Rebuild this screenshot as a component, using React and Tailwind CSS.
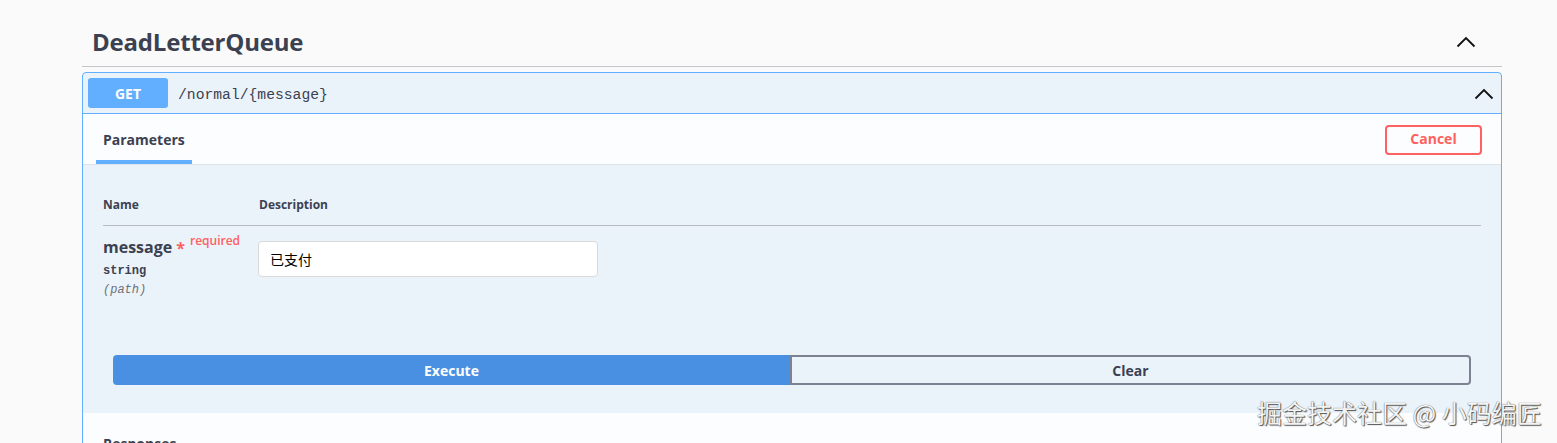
import React from "react";

const Chevron = ({ className }) => (
  <svg className={className} width="20" height="12" viewBox="0 0 20 12" fill="none">
    <path d="M1.5 10.5 L10 2 L18.5 10.5" stroke="#111" strokeWidth="1.8" />
  </svg>
);

export default function App() {
  const sans = "font-['Open_Sans','Noto_Sans','Noto_Sans_CJK_SC',sans-serif]";
  return (
    <div className={`relative min-h-screen bg-[#fafafa] ${sans} text-[#3b4151] overflow-hidden`}>
      <div className="ml-[82px] w-[1420px]">
        <div className="h-[67px] pt-[18px] border-b border-[#c4c6cb] flex items-center justify-between pl-[10px] pr-[26px]">
          <h3 className="text-[24px] font-bold leading-[48px] tracking-[-0.2px]">DeadLetterQueue</h3>
          <Chevron className="mt-[-1px]" />
        </div>

        <div className="mt-[5px] border border-[#61affe] rounded-[4px] bg-[#ebf3fa]">
          <div className="flex items-center p-[5px] border-b border-[#61affe]">
            <span className="w-[80px] h-[30px] rounded-[3px] bg-[#61affe] text-white text-[14px] font-bold flex items-center justify-center">
              GET
            </span>
            <span className="ml-[10px] mt-[4px] font-['Liberation_Mono',monospace] text-[14.7px] text-[#3b4151]">
              /normal/{"{message}"}
            </span>
            <Chevron className="ml-auto mr-[2px] mt-[2px]" />
          </div>

          <div className="h-[51px] bg-[#fcfdfe] border-b border-[#dfe3e8] flex items-end justify-between pl-[11px] pr-[19px]">
            <div className="flex flex-col items-center">
              <span className="px-[9px] text-[14px] font-bold leading-[20px] pb-[10px]">Parameters</span>
              <span className="h-[4px] w-[96px] bg-[#61affe]"></span>
            </div>
            <button className="mb-[9px] w-[97px] h-[30px] border-2 border-[#ff6060] rounded-[4px] text-[#ff6060] text-[14px] font-bold bg-transparent leading-[20px] pb-[2px]">
              Cancel
            </button>
          </div>

          <div className="px-[20px] pt-[31px] pb-[28px]">
            <div className="flex text-[12px] font-bold leading-[18px] pb-[11px] border-b border-[#b7bcc4]">
              <span className="w-[156px]">Name</span>
              <span>Description</span>
            </div>
            <div className="flex items-start">
              <div className="w-[155px] pt-[11px]">
                <div className="text-[16px] font-bold leading-[20px] flex items-start">
                  <span>message</span>
                  <span className="ml-[4px] text-[#ff6060] text-[16px] leading-[22px]">*</span>
                  <span className="ml-[5px] text-[#ff6060] text-[12px] font-semibold leading-[12px] mt-[-2px]">required</span>
                </div>
                <div className="mt-[5px] font-['Liberation_Mono',monospace] text-[12px] font-bold leading-[14px]">string</div>
                <div className="mt-[5px] font-['Liberation_Mono',monospace] text-[12px] italic leading-[14px] text-[#6b6f78]">(path)</div>
              </div>
              <div className="pt-[15px]">
                <div className="w-[340px] h-[36px] bg-white border border-[#d9d9d9] rounded-[4px] pl-[11px] flex items-center text-[14px] text-black font-['Noto_Sans_CJK_SC',sans-serif]">
                  已支付
                </div>
              </div>
            </div>
            <div className="mt-[58px] mx-[10px] flex h-[30px]">
              <button className="flex-1 bg-[#4990e2] text-white text-[14px] font-bold rounded-l-[4px]">Execute</button>
              <button className="flex-1 border-2 border-[#7d8293] rounded-r-[4px] text-[14px] font-bold text-[#3b4151] bg-transparent">
                Clear
              </button>
            </div>
          </div>

          <div className="bg-[#fcfdfe] pt-[18px] pl-[20px] h-[120px]">
            <span className="text-[14px] font-bold leading-[20px]">Responses</span>
          </div>
        </div>
      </div>

      <div className="absolute left-[1257px] top-[396px] text-[25px] leading-[32px] text-[#f4f4f4] font-['Noto_Sans_CJK_SC',sans-serif] [text-shadow:0_0_1px_#444,1px_1px_1px_#555]">
        掘金技术社区 @ 小码编匠
      </div>
    </div>
  );
}
